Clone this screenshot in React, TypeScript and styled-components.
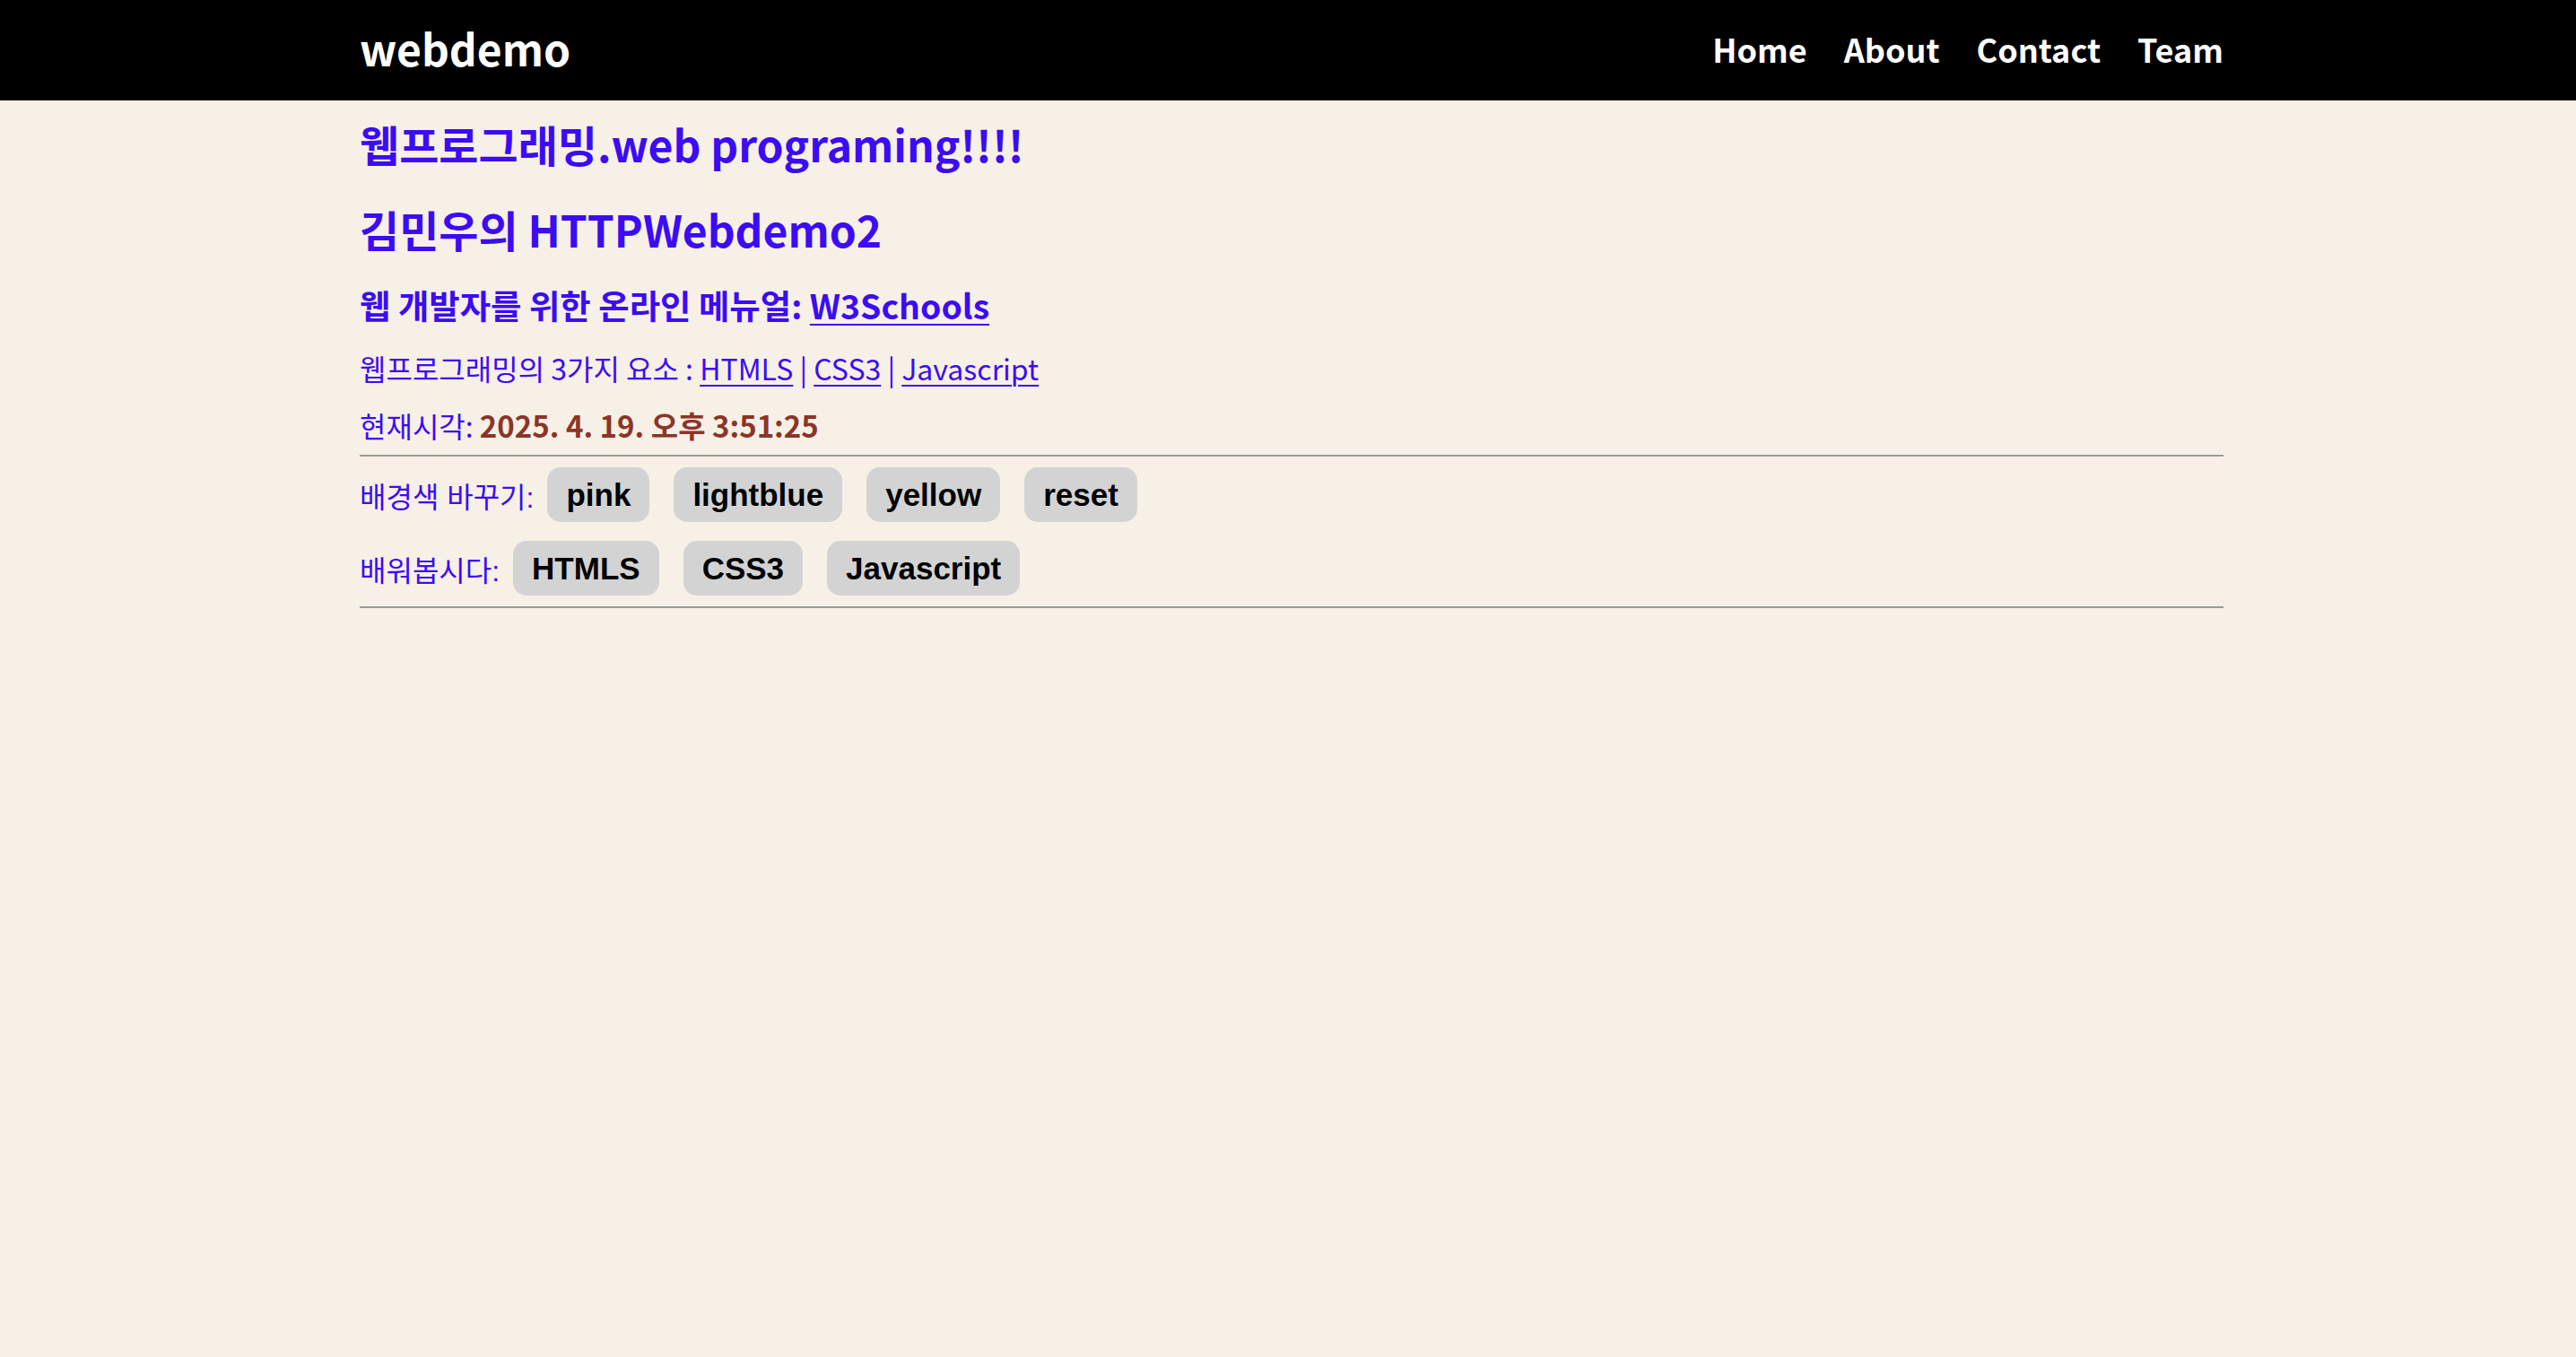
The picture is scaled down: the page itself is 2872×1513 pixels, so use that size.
import React from "react";
import styled, { createGlobalStyle } from "styled-components";

const GlobalStyle = createGlobalStyle`
  html, body {
    margin: 0;
    padding: 0;
    min-height: 100%;
    background: #f7f0e6;
  }
  body {
    font-family: "Noto Sans CJK KR", "Noto Sans", sans-serif;
  }
`;

const Page = styled.div`
  min-height: 1513px;
  background: #f7f0e6;
`;

const Header = styled.header`
  background: #000;
  height: 112px;
  padding: 0 393px 0 401px;
  display: flex;
  align-items: center;
  justify-content: space-between;
`;

const Brand = styled.div`
  color: #fff;
  font-family: "Noto Sans CJK KR", sans-serif;
  font-weight: 700;
  font-size: 48px;
  line-height: 1;
  padding-bottom: 6px;
`;

const Nav = styled.nav`
  display: flex;
  gap: 41px;
`;

const NavLink = styled.a`
  color: #fff;
  text-decoration: none;
  font-family: "Noto Sans CJK KR", sans-serif;
  font-weight: 700;
  font-size: 36px;
  line-height: 1;
  padding-bottom: 4px;
`;

const Main = styled.main`
  padding: 0 393px 0 401px;
  color: #3b0cf5;
`;

const Title = styled.h1<{ $top: number }>`
  margin: ${(p) => p.$top}px 0 0;
  font-size: 48px;
  font-weight: 700;
  line-height: 60px;
`;

const SubTitle = styled.h3`
  margin: 30px 0 0;
  font-size: 37.4px;
  font-weight: 700;
  line-height: 50px;
`;

const Line = styled.p<{ $top: number }>`
  margin: ${(p) => p.$top}px 0 0;
  font-size: 32px;
  line-height: 44px;
`;

const Link = styled.a`
  color: inherit;
  text-decoration: underline;
  text-underline-offset: 5px;
  text-decoration-thickness: 2px;
`;

const Time = styled.strong`
  color: #8c3428;
  font-weight: 700;
  font-size: 33px;
`;

const Rule = styled.hr<{ $top: number }>`
  margin: ${(p) => p.$top}px 0 0;
  border: none;
  height: 2px;
  background: #9b9b9b;
`;

const Row = styled.div<{ $top: number }>`
  margin-top: ${(p) => p.$top}px;
  display: flex;
  align-items: center;
`;

const RowLabel = styled.span`
  font-family: "Liberation Sans", "Noto Sans CJK KR", sans-serif;
  font-size: 32px;
  color: #3b0cf5;
  margin-right: 15px;
`;

const Buttons = styled.div`
  display: flex;
  gap: 27px;
`;

const Button = styled.button`
  height: 61px;
  padding: 0 21px;
  border: none;
  border-radius: 15px;
  background: #d3d3d3;
  color: #000;
  font-family: "Liberation Sans", Arial, sans-serif;
  font-weight: 700;
  font-size: 35px;
  cursor: pointer;
`;

export default function App() {
  return (
    <Page>
      <GlobalStyle />
      <Header>
        <Brand>webdemo</Brand>
        <Nav>
          <NavLink href="#">Home</NavLink>
          <NavLink href="#">About</NavLink>
          <NavLink href="#">Contact</NavLink>
          <NavLink href="#">Team</NavLink>
        </Nav>
      </Header>
      <Main>
        <Title $top={18}>웹프로그래밍.web programing!!!!</Title>
        <Title as="h2" $top={35}>김민우의 HTTPWebdemo2</Title>
        <SubTitle>
          웹 개발자를 위한 온라인 메뉴얼: <Link href="#">W3Schools</Link>
        </SubTitle>
        <Line $top={23}>
          웹프로그래밍의 3가지 요소 : <Link href="#">HTMLS</Link> |{" "}
          <Link href="#">CSS3</Link> | <Link href="#">Javascript</Link>
        </Line>
        <Line $top={20}>
          현재시각: <Time>2025. 4. 19. 오후 3:51:25</Time>
        </Line>
        <Rule $top={11} />
        <Row $top={12}>
          <RowLabel>배경색 바꾸기:</RowLabel>
          <Buttons>
            <Button>pink</Button>
            <Button>lightblue</Button>
            <Button>yellow</Button>
            <Button>reset</Button>
          </Buttons>
        </Row>
        <Row $top={21}>
          <RowLabel>배워봅시다:</RowLabel>
          <Buttons>
            <Button>HTMLS</Button>
            <Button>CSS3</Button>
            <Button>Javascript</Button>
          </Buttons>
        </Row>
        <Rule $top={12} />
      </Main>
    </Page>
  );
}
